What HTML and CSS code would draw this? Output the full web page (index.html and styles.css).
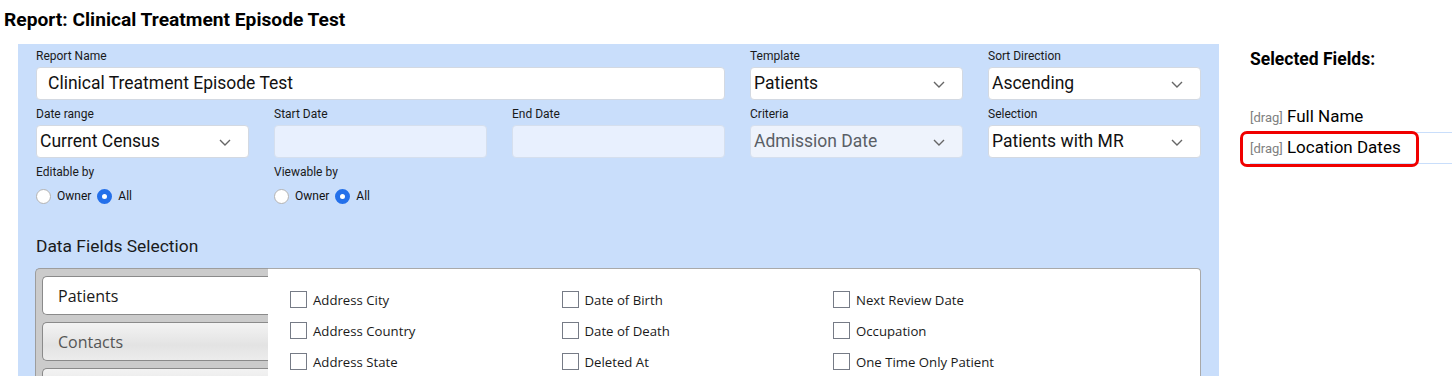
FILE: index.html
```html
<!DOCTYPE html>
<html lang="en">
<head>
    <meta charset="UTF-8">
    <meta name="viewport" content="width=device-width, initial-scale=1.0">
    <title>Report: Clinical Treatment Episode Test</title>
    <link rel="stylesheet" href="styles.css">
</head>
<body>
    <h1 class="page-title">Report: Clinical Treatment Episode Test</h1>

    <div class="layout">
        <div class="report-panel">
            <div class="form-grid">
                <div class="field span-3">
                    <label>Report Name</label>
                    <div class="text-input">Clinical Treatment Episode Test</div>
                </div>
                <div class="field">
                    <label>Template</label>
                    <div class="select">Patients
                        <svg class="chevron" viewBox="0 0 12 7"><path d="M1 1l5 5 5-5"/></svg>
                    </div>
                </div>
                <div class="field">
                    <label>Sort Direction</label>
                    <div class="select">Ascending
                        <svg class="chevron" viewBox="0 0 12 7"><path d="M1 1l5 5 5-5"/></svg>
                    </div>
                </div>

                <div class="field">
                    <label>Date range</label>
                    <div class="select">Current Census
                        <svg class="chevron" viewBox="0 0 12 7"><path d="M1 1l5 5 5-5"/></svg>
                    </div>
                </div>
                <div class="field">
                    <label>Start Date</label>
                    <div class="text-input disabled"></div>
                </div>
                <div class="field">
                    <label>End Date</label>
                    <div class="text-input disabled"></div>
                </div>
                <div class="field">
                    <label>Criteria</label>
                    <div class="select disabled">Admission Date
                        <svg class="chevron" viewBox="0 0 12 7"><path d="M1 1l5 5 5-5"/></svg>
                    </div>
                </div>
                <div class="field">
                    <label>Selection</label>
                    <div class="select">Patients with MR
                        <svg class="chevron" viewBox="0 0 12 7"><path d="M1 1l5 5 5-5"/></svg>
                    </div>
                </div>

                <div class="field">
                    <label>Editable by</label>
                    <div class="radios">
                        <input type="radio" name="editable" id="editOwner"><label for="editOwner">Owner</label>
                        <input type="radio" name="editable" id="editAll" checked><label for="editAll">All</label>
                    </div>
                </div>
                <div class="field">
                    <label>Viewable by</label>
                    <div class="radios">
                        <input type="radio" name="viewable" id="viewOwner"><label for="viewOwner">Owner</label>
                        <input type="radio" name="viewable" id="viewAll" checked><label for="viewAll">All</label>
                    </div>
                </div>
            </div>

            <h2 class="section-title">Data Fields Selection</h2>

            <div class="fields-box">
                <div class="tab-list">
                    <div class="tab active">Patients</div>
                    <div class="tab">Contacts</div>
                    <div class="tab"></div>
                </div>
                <div class="field-list">
                    <label class="check"><input type="checkbox"> Address City</label>
                    <label class="check"><input type="checkbox"> Date of Birth</label>
                    <label class="check"><input type="checkbox"> Next Review Date</label>
                    <label class="check"><input type="checkbox"> Address Country</label>
                    <label class="check"><input type="checkbox"> Date of Death</label>
                    <label class="check"><input type="checkbox"> Occupation</label>
                    <label class="check"><input type="checkbox"> Address State</label>
                    <label class="check"><input type="checkbox"> Deleted At</label>
                    <label class="check"><input type="checkbox"> One Time Only Patient</label>
                </div>
            </div>
        </div>

        <aside class="selected">
            <h3 class="selected-title">Selected Fields:</h3>
            <ul class="selected-list">
                <li><span class="drag">[drag]</span> Full Name</li>
                <li><span class="drag">[drag]</span> Location Dates<span class="highlight"></span></li>
            </ul>
        </aside>
    </div>
</body>
</html>
```

FILE: styles.css
```css
body, html {
    margin: 0;
    height: 100%;
    font-family: Roboto, Arial, sans-serif;
    color: #111;
    overflow: hidden;
}

.page-title {
    margin: 0;
    padding: 9px 4px 13px;
    font-size: 19.2px;
    line-height: 22px;
    font-weight: bold;
    color: #000;
}

.layout {
    display: flex;
    align-items: flex-start;
}

.report-panel {
    margin-left: 18px;
    width: 1201px;
    flex: none;
    box-sizing: border-box;
    padding: 5px 17px 0 18px;
    background-color: #c9defb;
    height: 340px;
}

.form-grid {
    display: grid;
    grid-template-columns: repeat(5, 213px);
    column-gap: 25px;
    row-gap: 7px;
}

.span-3 {
    grid-column: span 3;
}

.field > label {
    display: block;
    font-size: 12px;
    line-height: 14px;
    margin-bottom: 4px;
    color: #1a1a1a;
}

.text-input, .select {
    box-sizing: border-box;
    height: 33px;
    background: #fff;
    border: 1px solid #d3d9e2;
    border-radius: 4px;
    font-size: 17.5px;
    line-height: 31px;
    color: #111;
    white-space: nowrap;
}

.text-input {
    padding: 0 11px;
}

.select {
    position: relative;
    padding: 0 3px;
}

.disabled {
    background: #e8f0fe;
    border-color: #d5dfee;
}

.select.disabled {
    background: #eef3fc;
    color: #5a5f66;
}

.chevron {
    position: absolute;
    right: 17px;
    top: 13px;
    width: 12px;
    height: 7px;
    fill: none;
    stroke: #666;
    stroke-width: 1.4;
}

.radios {
    display: flex;
    align-items: center;
    height: 20px;
    margin-top: 7px;
    font-size: 12px;
}

.radios input {
    appearance: none;
    -webkit-appearance: none;
    margin: 0;
    width: 15px;
    height: 15px;
    border-radius: 50%;
    border: 1.5px solid #b3b3b3;
    background: #fff;
    box-sizing: border-box;
}

.radios input:checked {
    border: 5px solid #2470ea;
    background: #fff;
}

.radios label {
    margin: 0 6px 0 6px;
}

.radios label:last-child {
    margin-left: 6px;
}

.section-title {
    margin: 30px 0 12px;
    font-size: 17.4px;
    line-height: 20px;
    font-weight: normal;
    color: #1a1a1a;
}

.fields-box {
    display: flex;
    width: 1166px;
    height: 140px;
    margin-left: -1px;
}

.tab-list {
    width: 233px;
    flex: none;
    box-sizing: border-box;
    background: #cbcbcb;
    border: 1px solid #9d9d9d;
    border-right: none;
    border-bottom: none;
    border-top-left-radius: 5px;
    padding: 7px 0 0 6px;
    display: flex;
    flex-direction: column;
    gap: 7px;
}

.tab {
    box-sizing: border-box;
    height: 39px;
    flex: none;
    margin-right: -2px;
    border: 1px solid #8a8a8a;
    border-right: none;
    border-radius: 5px 0 0 5px;
    padding-left: 15px;
    font-family: "Open Sans", "DejaVu Sans", sans-serif;
    font-size: 16px;
    line-height: 38px;
    color: #555;
    background: linear-gradient(#f3f3f3, #e3e3e3 60%, #ececec);
}

.tab.active {
    background: #fff;
    color: #1a1a1a;
}

.field-list {
    flex: 1;
    background: #fff;
    border-top: 1px solid #a9a9a9;
    border-right: 1px solid #a9a9a9;
    border-top-right-radius: 4px;
    padding: 15px 0 0 22px;
    display: grid;
    grid-template-columns: repeat(3, 271.5px);
    grid-auto-rows: 31px;
    align-content: start;
}

.check {
    display: flex;
    align-items: center;
    gap: 6px;
    font-family: "Open Sans", "DejaVu Sans", sans-serif;
    font-size: 13.2px;
    color: #1a1a1a;
    white-space: nowrap;
}

.check input {
    appearance: none;
    -webkit-appearance: none;
    margin: 0;
    width: 17px;
    height: 17px;
    border: 1px solid #767b86;
    background: #fff;
    box-sizing: border-box;
}

.selected {
    flex: 1;
    margin-left: 31px;
    padding-top: 5px;
}

.selected-title {
    margin: 0;
    font-size: 17.5px;
    line-height: 20px;
    font-weight: bold;
    color: #000;
}

.selected-list {
    list-style: none;
    margin: 33px 0 0;
    padding: 0;
}

.selected-list li {
    position: relative;
    height: 30px;
    line-height: 28px;
    font-size: 17px;
    color: #000;
    border-bottom: 1px solid #c9defb;
}

.drag {
    font-size: 13px;
    color: #808080;
}

.highlight {
    position: absolute;
    left: -10px;
    top: -2px;
    width: 179px;
    height: 36px;
    box-sizing: border-box;
    border: 3px solid #f00000;
    border-radius: 7px;
}
```
